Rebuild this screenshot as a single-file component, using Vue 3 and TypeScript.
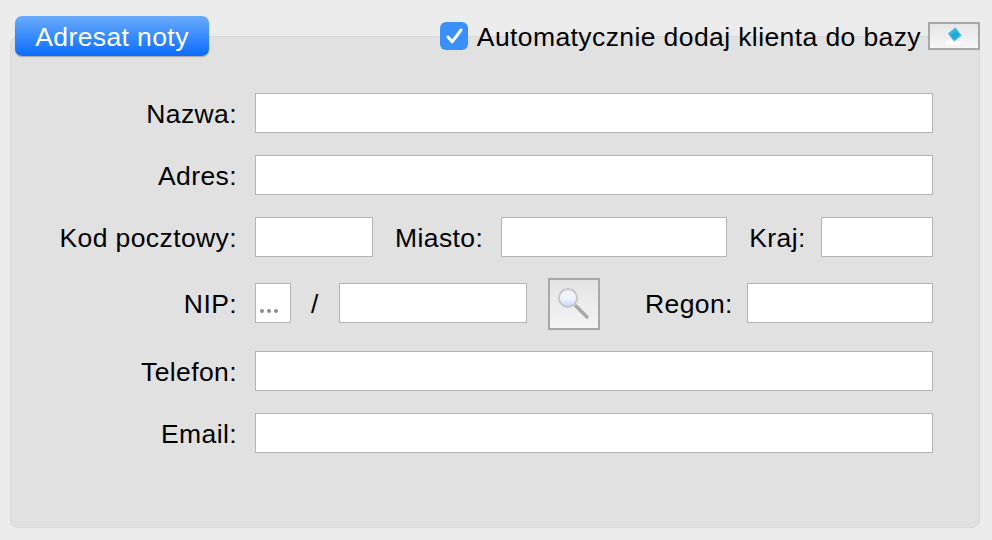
<script setup lang="ts">
const topRows = ['Nazwa:', 'Adres:'];
const bottomRows = ['Telefon:', 'Email:'];
</script>

<template>
  <div class="page">
    <div class="head">
      <button class="tab"><span class="tab-text">Adresat noty</span></button>
      <div class="auto">
        <span class="check">
          <svg width="28" height="28" viewBox="0 0 28 28"><path d="M8 15l4.200 4.800L21 8" fill="none" stroke="#fff" stroke-width="3" stroke-linecap="round" stroke-linejoin="round" /></svg>
        </span>
        <span class="auto-text">Automatycznie dodaj klienta do bazy</span>
        <button class="mini">
          <svg class="soft" width="24" height="24" viewBox="0 0 24 24">
            <ellipse cx="11" cy="18.500" rx="8" ry="2.500" fill="#fff" />
            <path d="M9 13.500L16.500 7.500" stroke="#35bbe0" stroke-width="10" />
            <path d="M10 13.500L16 8.500" stroke="#22aad6" stroke-width="5" />
          </svg>
        </button>
      </div>
    </div>

    <div class="panel">
      <div v-for="l in topRows" :key="l" class="row">
        <label class="lbl">{{ l }}</label>
        <input class="field grow" type="text" />
      </div>

      <div class="row">
        <label class="lbl">Kod pocztowy:</label>
        <input class="field w-kod" type="text" />
        <label class="lbl-in miasto">Miasto:</label>
        <input class="field w-miasto" type="text" />
        <label class="lbl-in kraj">Kraj:</label>
        <input class="field grow" type="text" />
      </div>

      <div class="row row-nip">
        <label class="lbl">NIP:</label>
        <div class="field w-pre"><span class="dots"><i></i><i></i><i></i></span></div>
        <span class="slash">/</span>
        <input class="field w-nip" type="text" />
        <button class="search">
          <svg class="soft" width="44" height="44" viewBox="0 0 44 44">
            <defs>
              <linearGradient id="lens" x1="0" y1="0" x2="0" y2="1">
                <stop offset="0" stop-color="#f2f2f2" />
                <stop offset="0.55" stop-color="#eef3fb" />
                <stop offset="1" stop-color="#bcd4fa" />
              </linearGradient>
            </defs>
            <path d="M24 24l11 11" stroke="#a9a9a9" stroke-width="3.500" stroke-linecap="round" />
            <circle cx="16" cy="16" r="9" fill="url(#lens)" stroke="#c6c6c6" stroke-width="2" />
          </svg>
        </button>
        <label class="lbl-in regon">Regon:</label>
        <input class="field grow" type="text" />
      </div>

      <div v-for="l in bottomRows" :key="l" class="row">
        <label class="lbl">{{ l }}</label>
        <input class="field grow" type="text" />
      </div>
    </div>
  </div>
</template>

<style>
html, body { margin: 0; background: #ececec; }
</style>

<style scoped>
.page {
  width: 992px;
  height: 540px;
  box-sizing: border-box;
  padding: 16px 12px 12px 10px;
  overflow: hidden;
  background: #ececec;
  font-family: "Liberation Sans", Arial, sans-serif;
  font-size: 26.5px;
  letter-spacing: 0.4px;
  color: #000;
}
.head {
  display: flex;
  justify-content: space-between;
  align-items: flex-start;
  height: 40px;
  margin-bottom: -20px;
  padding-left: 5px;
  position: relative;
  z-index: 1;
}
.tab {
  width: 194px;
  height: 40px;
  padding: 2px 0 0;
  border: 0;
  border-radius: 7px;
  background: linear-gradient(#6aabfb, #0a6cfb);
  box-shadow: 0 1px 1px rgba(0, 0, 0, 0.25);
  color: #fff;
  font: 26.5px "Liberation Sans", Arial, sans-serif;
  letter-spacing: 0.4px;
}
.auto {
  display: flex;
  align-items: center;
  height: 28px;
  margin-top: 6px;
}
.check {
  width: 28px;
  height: 28px;
  border-radius: 6px;
  background: #3b8ff8;
}
.check svg { display: block; }
.auto-text {
  margin-left: 9px;
  padding-top: 2px;
  white-space: nowrap;
}
.soft { filter: blur(0.6px); }
.mini {
  width: 52px;
  height: 28px;
  margin-left: 7px;
  padding: 0;
  border: 2px solid #a8a8a8;
  background: linear-gradient(#e6e6e6, #f6f6f6);
  display: flex;
  align-items: center;
  justify-content: center;
}
.panel {
  width: 970px;
  height: 492px;
  box-sizing: border-box;
  padding: 56px 46px 0 0;
  background: #e1e1e1;
  border: 1px solid #d9d9d9;
  border-radius: 8px;
}
.row {
  display: flex;
  align-items: center;
  height: 40px;
  margin-bottom: 22px;
}
.row:nth-child(3) { margin-bottom: 26px; }
.row-nip { margin-bottom: 28px; }
.lbl {
  width: 226px;
  margin-right: 18px;
  padding-top: 2px;
  text-align: right;
  white-space: nowrap;
}
.lbl-in {
  padding-top: 2px;
  white-space: nowrap;
}
.field {
  height: 40px;
  box-sizing: border-box;
  padding: 0;
  background: #fff;
  border: 1px solid #b4b4b4;
  outline: none;
  flex: none;
}
.grow { flex: 1; min-width: 0; }
.w-kod { width: 118px; }
.miasto { margin-left: 22px; margin-right: 18px; }
.w-miasto { width: 226px; }
.kraj { margin-left: 22px; margin-right: 15px; }
.w-pre { width: 36px; position: relative; }
.dots {
  position: absolute;
  left: 4px;
  bottom: 9px;
  display: flex;
  gap: 3px;
}
.dots i {
  width: 4px;
  height: 4px;
  border-radius: 50%;
  background: #8c8c8c;
}
.slash {
  width: 48px;
  padding-top: 2px;
  text-align: center;
}
.w-nip { width: 188px; }
.search {
  width: 52px;
  height: 52px;
  flex: none;
  margin: 2px 0 0 21px;
  padding: 0;
  border: 2px solid #a8a8a8;
  background: linear-gradient(#e4e4e4, #f4f4f4);
  display: flex;
  align-items: center;
  justify-content: center;
}
.regon { margin-left: 45px; margin-right: 14px; }
</style>
